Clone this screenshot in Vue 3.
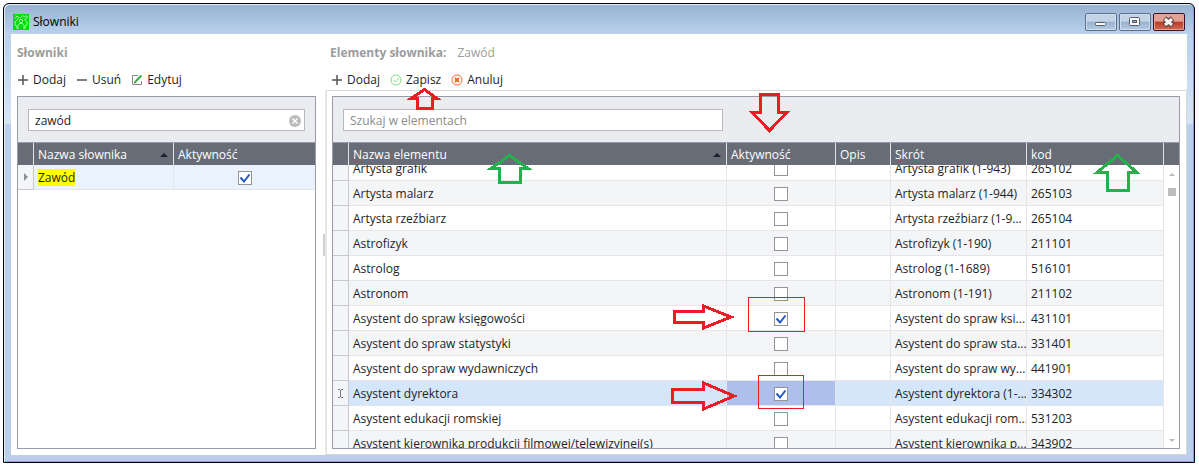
<script setup>
import { ref } from "vue";

const dictionarySearch = ref("zawód");
const elementSearch = ref("");

const dictionaries = ref([
    { name: "Zawód", active: true }
])

const elements = ref([
    { name: "Artysta grafik", active: false, short: "Artysta grafik (1-943)", code: "265102" },
    { name: "Artysta malarz", active: false, short: "Artysta malarz (1-944)", code: "265103" },
    { name: "Artysta rzeźbiarz", active: false, short: "Artysta rzeźbiarz (1-9...", code: "265104" },
    { name: "Astrofizyk", active: false, short: "Astrofizyk (1-190)", code: "211101" },
    { name: "Astrolog", active: false, short: "Astrolog (1-1689)", code: "516101" },
    { name: "Astronom", active: false, short: "Astronom (1-191)", code: "211102" },
    { name: "Asystent do spraw księgowości", active: true, short: "Asystent do spraw ksi...", code: "431101" },
    { name: "Asystent do spraw statystyki", active: false, short: "Asystent do spraw sta...", code: "331401" },
    { name: "Asystent do spraw wydawniczych", active: false, short: "Asystent do spraw wy...", code: "441901" },
    { name: "Asystent dyrektora", active: true, short: "Asystent dyrektora (1-...", code: "334302" },
    { name: "Asystent edukacji romskiej", active: false, short: "Asystent edukacji rom...", code: "531203" },
    { name: "Asystent kierownika produkcji filmowej/telewizyjnej(s)", active: false, short: "Asystent kierownika p...", code: "343902" }
])

const selected = ref(9);
</script>

<template>
    <div class="window">
        <header class="titlebar">
            <svg class="app-icon" viewBox="0 0 16 16">
                <rect width="16" height="16" fill="#00dc0c" />
                <g fill="none" stroke="#a4f8a4">
                    <circle cx="8" cy="7" r="1.700" />
                    <path d="M5 15V11.500L6.500 9.500H9.500L11 11.500V15" />
                    <path d="M4.500 5.500 2 8v3l2 1v3M11.500 5.500 14 8v3l-2 1v3M2 4.500l2-2.500 2 1.500L4.500 5.500M7 4l3-2.500 1.500 1.500 2-1.500 1 2-3 2" />
                </g>
            </svg>
            <span class="title">Słowniki</span>
            <div class="caption-buttons">
                <button class="caption" aria-label="Minimalizuj">
                    <svg viewBox="0 0 30 16"><rect x="9.500" y="8.500" width="10" height="3" rx="1" fill="#f8fafc" stroke="#555b66" /></svg>
                </button>
                <button class="caption" aria-label="Maksymalizuj">
                    <svg viewBox="0 0 30 16">
                        <rect x="9.500" y="3.500" width="10" height="8" rx="1" fill="#f8fafc" stroke="#555b66" />
                        <rect x="12.500" y="6.500" width="4" height="2" fill="#8fabc9" stroke="#555b66" />
                    </svg>
                </button>
                <button class="caption close" aria-label="Zamknij">
                    <svg viewBox="0 0 30 16">
                        <path d="M10.500 4.500 18.500 11.500M18.500 4.500 10.500 11.500" stroke="#4a3c44" stroke-width="5" />
                        <path d="M11 5 18 11M18 5 11 11" stroke="#f8f4f4" stroke-width="3" />
                    </svg>
                </button>
            </div>
        </header>

        <main class="content">
            <section class="left-pane">
                <h2>Słowniki</h2>
                <div class="toolbar">
                    <button>
                        <svg viewBox="0 0 12 12"><path d="M6 1v10M1 6h10" stroke="#555" stroke-width="1.500" /></svg>Dodaj
                    </button>
                    <button>
                        <svg viewBox="0 0 12 12"><path d="M1 6h10" stroke="#555" stroke-width="1.500" /></svg>Usuń
                    </button>
                    <button>
                        <svg viewBox="0 0 12 12">
                            <path d="M7 1.500H1.500v9h9V7" fill="none" stroke="#888" />
                            <path d="M4.500 7.500 10.500 1.500" stroke="#2fae3f" stroke-width="2" />
                            <path d="M3 9.500 3.500 7 5.500 8.700z" fill="#555" />
                        </svg>Edytuj
                    </button>
                </div>
                <div class="grid">
                    <div class="search">
                        <div class="search-box">
                            <input v-model="dictionarySearch" type="text" aria-label="Szukaj w słownikach" />
                            <button class="clear" aria-label="Wyczyść" @click="dictionarySearch = ''">
                                <svg viewBox="0 0 12 12">
                                    <circle cx="6" cy="6" r="6" fill="#bbb" />
                                    <path d="M3.500 3.500l5 5M8.500 3.500l-5 5" stroke="#fff" stroke-width="1.500" />
                                </svg>
                            </button>
                        </div>
                    </div>
                    <table class="dictionaries">
                        <colgroup>
                            <col class="c-marker" /><col class="c-name" /><col />
                        </colgroup>
                        <thead>
                            <tr>
                                <th></th>
                                <th><span class="sorted">Nazwa słownika</span></th>
                                <th>Aktywność</th>
                            </tr>
                        </thead>
                        <tbody>
                            <tr v-for="item in dictionaries" :key="item.name">
                                <td class="marker"><svg viewBox="0 0 5 8"><path d="M1 0l4 4-4 4z" fill="#8c8e96" /></svg></td>
                                <td><mark>{{ item.name }}</mark></td>
                                <td class="check"><input v-model="item.active" type="checkbox" :aria-label="item.name" /></td>
                            </tr>
                        </tbody>
                    </table>
                </div>
            </section>

            <div class="splitter"></div>

            <section class="right-pane">
                <h2>Elementy słownika: <span>Zawód</span></h2>
                <div class="toolbar">
                    <button>
                        <svg viewBox="0 0 12 12"><path d="M6 1v10M1 6h10" stroke="#555" stroke-width="1.500" /></svg>Dodaj
                    </button>
                    <button>
                        <svg viewBox="0 0 12 12" fill="none" stroke="#84d982">
                            <circle cx="6" cy="6" r="5" /><path d="M3.500 6 5.500 8 9 4" />
                        </svg>Zapisz
                    </button>
                    <button>
                        <svg viewBox="0 0 12 12" fill="none" stroke="#f0662b">
                            <circle cx="6" cy="6" r="5" /><path d="M4 4l4 4M8 4l-4 4" stroke-width="2" />
                        </svg>Anuluj
                    </button>
                </div>
                <div class="frame">
                    <div class="grid">
                        <div class="search">
                            <div class="search-box wide">
                                <input v-model="elementSearch" type="text" placeholder="Szukaj w elementach" aria-label="Szukaj w elementach" />
                            </div>
                        </div>
                        <table class="elements">
                            <colgroup>
                                <col class="c-marker" /><col /><col class="c-active" /><col class="c-desc" /><col class="c-short" /><col class="c-code" /><col class="c-scroll" />
                            </colgroup>
                            <thead>
                                <tr>
                                    <th></th>
                                    <th><span class="sorted">Nazwa elementu</span></th>
                                    <th>Aktywność</th>
                                    <th>Opis</th>
                                    <th>Skrót</th>
                                    <th>kod</th>
                                    <th></th>
                                </tr>
                            </thead>
                        </table>
                        <div class="body">
                            <div class="rows">
                                <table class="elements scrolled">
                                    <colgroup>
                                        <col class="c-marker" /><col /><col class="c-active" /><col class="c-desc" /><col class="c-short" /><col class="c-code" />
                                    </colgroup>
                                    <tbody>
                                        <tr v-for="(item, index) in elements" :key="item.code" :class="{ selected: index === selected }" @click="selected = index">
                                            <td class="marker">
                                                <svg v-if="index === selected" class="cursor" viewBox="0 0 5 9"><path d="M0 .5h2M3 .5h2M2.500 1v7M0 8.500h2M3 8.500h2" stroke="#777" /></svg>
                                            </td>
                                            <td>{{ item.name }}</td>
                                            <td class="check"><input v-model="item.active" type="checkbox" :aria-label="item.name" /></td>
                                            <td></td>
                                            <td>{{ item.short }}</td>
                                            <td>{{ item.code }}</td>
                                        </tr>
                                    </tbody>
                                </table>
                            </div>
                            <div class="scrollbar">
                                <svg viewBox="0 0 6 3"><path d="M0 3l3-3 3 3z" fill="#bbb" /></svg>
                                <div class="thumb"></div>
                                <svg class="down" viewBox="0 0 6 3"><path d="M0 0l3 3 3-3z" fill="#bbb" /></svg>
                            </div>
                        </div>
                    </div>
                </div>
            </section>
        </main>

        <!-- hand-drawn hints over the window -->
        <svg class="hints" width="1199" height="465" fill="none" shape-rendering="crispEdges">
            <g stroke="#ed1c24" stroke-width="3">
                <path d="M424.500 89.500 411 98.500H417.500V108.500H432.500V98.500H437z" />
                <path d="M760.500 94.500H778.500V112.500H787L769.500 130.500 752 112.500H760.500z" />
                <path d="M674.500 311.500H703.500V306L731 317 703.500 328V322.500H674.500z" />
                <path d="M672.500 389.500H703.500V383L734 396 703.500 409V402.500H672.500z" />
            </g>
            <g stroke="#22b14c" stroke-width="3">
                <path d="M509.500 155.500 491 168.500H499.500V182.500H520.500V168.500H528z" />
                <path d="M1117.500 155.500 1097 172.500H1107.500V190.500H1128.500V172.500H1137z" />
            </g>
            <g stroke="#ed1c24">
                <rect x="748.500" y="297.500" width="56" height="34" />
                <rect x="758.500" y="375.500" width="45" height="33" />
            </g>
        </svg>
    </div>
</template>

<style>
body {
    background: #fff;
}

#app {
    height: 100vh;
    box-sizing: border-box;
    padding: 3px 4px 2px 3px;
}
</style>

<style scoped>
* {
    box-sizing: border-box;
}

.window {
    height: 100%;
    display: flex;
    flex-direction: column;
    padding: 0 7px 7px;
    border: 1px solid #000;
    border-radius: 6px 6px 0 0;
    background: linear-gradient(#98b2d1, #b9d1eb 30px, #d6e5f5 119px, #bad0ea 121px);
    box-shadow: inset 1px 1px #e3eef9, inset -1px -1px #3fc0dc;
    font-family: "Open Sans", "Noto Sans", sans-serif;
    font-size: 12px;
    line-height: 16px;
    color: #1e1e28;
}

button,
input {
    font: inherit;
    color: inherit;
    margin: 0;
    padding: 0;
}

.titlebar {
    height: 30px;
    flex: none;
    display: flex;
    align-items: center;
    gap: 4px;
    padding: 6px 2px 0;
    color: #000;
}

.app-icon {
    width: 16px;
    height: 16px;
}

.title {
    flex: 1;
}

.caption-buttons {
    display: flex;
    gap: 2px;
}

.caption {
    width: 32px;
    height: 18px;
    border: 1px solid #5c708c;
    border-radius: 2px;
    background: linear-gradient(#c3d4e7 45%, #98b2cf 50%, #b4cbe4);
    box-shadow: inset 0 0 0 1px #d0deed;
}

.caption svg {
    display: block;
    width: 30px;
    height: 16px;
}

.close {
    border-color: #43101c;
    background: linear-gradient(#e4a093 45%, #b83b25 50%, #d36b57);
    box-shadow: inset 0 0 0 1px #e3a397;
}

.content {
    flex: 1;
    min-height: 0;
    display: flex;
    background: #fff;
}

.left-pane {
    flex: 0 0 305px;
    display: flex;
    flex-direction: column;
    padding: 0 0 6px 6px;
}

.right-pane {
    flex: 1;
    min-width: 0;
    display: flex;
    flex-direction: column;
}

h2 {
    margin: 10px 0 0;
    font-size: 12px;
    line-height: 18px;
    color: #9c9c9c;
}

.right-pane h2 {
    padding-left: 5px;
}

h2 span {
    margin-left: 8px;
    font-weight: normal;
}

.toolbar {
    display: flex;
    gap: 10px;
    padding: 8px 0 0;
}

.right-pane .toolbar {
    padding-left: 6px;
}

.toolbar button {
    display: flex;
    align-items: center;
    gap: 4px;
    height: 20px;
    border: 0;
    background: none;
}

.toolbar svg {
    width: 12px;
    height: 12px;
}

.splitter {
    width: 2px;
    height: 22px;
    align-self: center;
    margin-left: 7px;
    background: #d0d0d0;
}

.left-pane .grid {
    margin-top: 6px;
}

.frame {
    flex: 1;
    min-height: 0;
    display: flex;
    padding: 5px 6px 5px 5px;
    border: 1px solid #d9d9d9;
    border-left: 2px solid #e6e6e6;
}

.grid {
    flex: 1;
    min-width: 0;
    min-height: 0;
    display: flex;
    flex-direction: column;
    border: 1px solid #9a9aa8;
}

.search {
    flex: none;
    padding: 12px 10px 11px;
    background: #ebecf0;
    border-bottom: 1px solid #9a9aa8;
}

.search-box {
    display: flex;
    align-items: center;
    height: 22px;
    padding: 1px 3px 0 6px;
    border: 1px solid #b9b9b9;
    background: #fff;
}

.wide {
    width: 380px;
}

.search-box input {
    flex: 1;
    min-width: 0;
    border: 0;
    outline: 0;
    background: none;
}

.search-box input::placeholder {
    color: #8c8c8c;
    opacity: 1;
}

.clear {
    width: 12px;
    height: 12px;
    border: 0;
    background: none;
}

.clear svg {
    display: block;
}

table {
    width: 100%;
    table-layout: fixed;
    border-collapse: separate;
    border-spacing: 0;
}

.c-marker {
    width: 16px;
}

.c-name {
    width: 140px;
}

.c-active {
    width: 109px;
}

.c-desc {
    width: 55px;
}

.c-short {
    width: 136px;
}

.c-code {
    width: 137px;
}

.c-scroll {
    width: 15px;
}

th {
    height: 22px;
    padding: 1px 4px 0;
    border-right: 1px solid #e3e3e6;
    background: #686c77;
    color: #fff;
    font-weight: normal;
    text-align: left;
    white-space: nowrap;
}

th:last-child {
    border-right: 0;
}

.sorted {
    display: flex;
    align-items: center;
    justify-content: space-between;
    padding-right: 1px;
}

.sorted::after {
    content: "";
    border: 4px solid transparent;
    border-top: 0;
    border-bottom-color: #1e1e32;
}

td {
    height: 25px;
    padding: 2px 4px 0;
    border-right: 1px solid #e6e6e8;
    border-bottom: 1px solid #e6e6e8;
    white-space: nowrap;
    overflow: hidden;
}

.dictionaries td {
    background: #eaf2fd;
}

.dictionaries td:last-child {
    border-right: 0;
}

.elements tr:nth-child(even) td {
    background: #f4f5f7;
}

.elements tr.selected td {
    background: #d3e6fa;
}

.elements tr.selected .check {
    background: #afbfec;
}

.dictionaries .marker,
.elements tr .marker,
.elements tr.selected .marker {
    padding: 0;
    border-color: #c8c8d0;
    background: #f4f5f9;
    text-align: center;
}

.marker svg {
    display: block;
    width: 5px;
    height: 8px;
    margin: 0 auto;
}

.marker .cursor {
    height: 9px;
}

mark {
    background: #ff0;
    color: inherit;
}

.check {
    padding: 1px 0 0;
    text-align: center;
}

.check input {
    display: block;
    width: 14px;
    height: 14px;
    margin: 0 auto;
    appearance: none;
    border: 1px solid #949498;
    background: #fff;
}

.check input:checked {
    background: #fff url("data:image/svg+xml,%3Csvg xmlns='http://www.w3.org/2000/svg' viewBox='0 0 12 12'%3E%3Cpath d='M1.500 5.500 5 9.500 10.500 2.500' fill='none' stroke='%232459c4' stroke-width='2'/%3E%3C/svg%3E");
}

.body {
    flex: 1;
    min-height: 0;
    display: flex;
}

.rows {
    flex: 1;
    min-width: 0;
    overflow: hidden;
}

.scrolled {
    margin-top: -9px;
}

.scrollbar {
    width: 15px;
    display: flex;
    flex-direction: column;
    align-items: center;
    gap: 12px;
    padding: 8px 0 6px;
}

.scrollbar svg {
    width: 6px;
    height: 3px;
}

.thumb {
    width: 8px;
    height: 8px;
    background: #bcbcbc;
}

.down {
    margin-top: auto;
}

.hints {
    position: absolute;
    top: 0;
    left: 0;
    pointer-events: none;
}
</style>
